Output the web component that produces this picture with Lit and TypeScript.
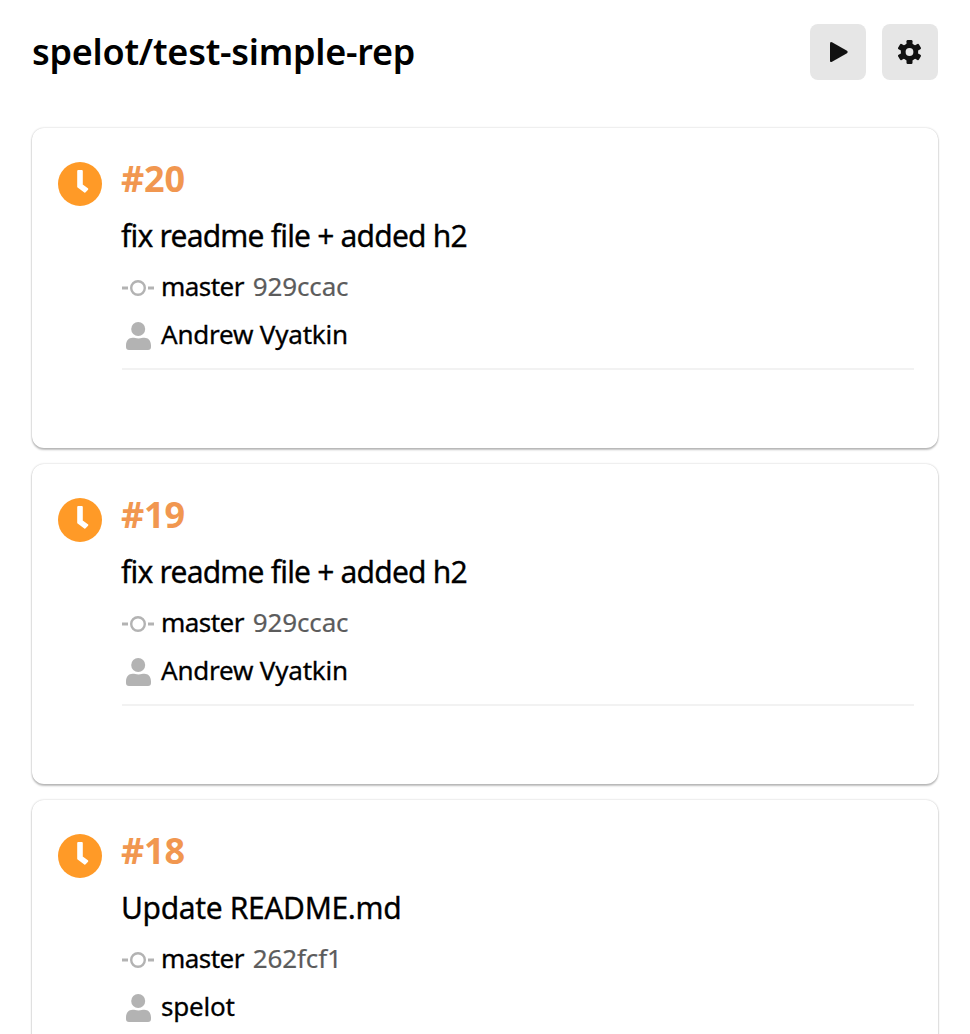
import { LitElement, html, css } from "lit";
import { customElement, property } from "lit/decorators.js";

interface Build {
  num: number;
  message: string;
  tracking: number;
  branch: string;
  hash: string;
  author: string;
}

const builds: Build[] = [
  { num: 20, message: "fix readme file + added h2", tracking: -0.8, branch: "master", hash: "929ccac", author: "Andrew Vyatkin" },
  { num: 19, message: "fix readme file + added h2", tracking: -0.8, branch: "master", hash: "929ccac", author: "Andrew Vyatkin" },
  { num: 18, message: "Update README.md", tracking: -0.36, branch: "master", hash: "262fcf1", author: "spelot" },
];

@customElement("build-card")
export class BuildCard extends LitElement {
  @property({ attribute: false }) build!: Build;

  static styles = css`
    :host {
      display: flex;
      box-sizing: border-box;
      height: 320px;
      padding: 24px 24px 0 24px;
      border-radius: 12px;
      background: #fff;
      box-shadow: 0 0 2px rgba(0, 0, 0, 0.24), 0 2px 2px rgba(0, 0, 0, 0.24);
    }
    svg { display: block; flex: none; }
    .status { margin: 10px 20px 0 2px; }
    .body { flex: 1; min-width: 0; }
    .num {
      box-sizing: border-box;
      padding-top: 3px;
      font-size: 36px;
      font-weight: 700;
      line-height: 48px;
      height: 56px;
      letter-spacing: -0.2px;
      margin-left: -1px;
      color: #f19750;
    }
    .message {
      box-sizing: border-box;
      padding-top: 8px;
      margin-left: -1px;
      font-size: 30px;
      line-height: 40px;
      height: 56px;
      -webkit-text-stroke: 0.3px currentColor;
    }
    .meta {
      display: flex;
      align-items: center;
      height: 48px;
      font-size: 26px;
      line-height: 32px;
      white-space: nowrap;
    }
    .meta svg { margin-right: 7px; }
    .meta span { margin-bottom: 4px; }
    .branch { letter-spacing: -0.55px; -webkit-text-stroke: 0.3px currentColor; }
    .author { letter-spacing: -0.2px; -webkit-text-stroke: 0.3px currentColor; }
    .hash { margin-left: 9px; letter-spacing: -0.15px; color: #5c5c5c; -webkit-text-stroke: 0.2px currentColor; }
    .rule { border-top: 2px solid #f2f2f2; margin-top: 8px; }
  `;

  render() {
    const b = this.build;
    return html`
      <svg class="status" width="44" height="44" viewBox="0 0 44 44">
        <circle cx="22" cy="22" r="22" fill="#ff9a27" />
        <path d="M20.2 9H23.800V23L29.300 27L26.900 29.600L20.2 24.800Z" fill="#fff" stroke="#fff" stroke-width="2" stroke-linejoin="round" />
      </svg>
      <div class="body">
        <div class="num">#${b.num}</div>
        <div class="message" style="letter-spacing:${b.tracking}px">${b.message}</div>
        <div class="meta">
          <svg width="32" height="32" viewBox="0 0 32 32" fill="none" stroke="#b3b3b3">
            <path d="M0 16H6M26 16H32" stroke-width="3" />
            <circle cx="16" cy="16" r="6.800" stroke-width="2.400" />
          </svg>
          <span class="branch">${b.branch}</span><span class="hash">${b.hash}</span>
        </div>
        <div class="meta">
          <svg width="32" height="32" viewBox="0 0 32 32" fill="#b3b3b3">
            <circle cx="16.200" cy="9" r="7" />
            <path d="M4 25.500C4 20.500 7 17.800 10.500 17.800C13 17.800 13.500 18.500 16.500 18.500S20 17.800 22.500 17.800C26 17.800 29 20.500 29 25.500V27Q29 30 26 30H7Q4 30 4 27Z" />
          </svg>
          <span class="author">${b.author}</span>
        </div>
        <div class="rule"></div>
      </div>
    `;
  }
}

@customElement("app-root")
export class AppRoot extends LitElement {
  static styles = css`
    :host {
      display: block;
      box-sizing: border-box;
      height: 1034px;
      overflow: hidden;
      padding: 24px 32px 0;
      background: #fff;
      color: #000;
      font-family: "Noto Sans", sans-serif;
    }
    header { display: flex; align-items: center; gap: 16px; margin-bottom: 48px; }
    h1 { flex: 1; margin: 0; font-size: 36px; font-weight: 600; line-height: 56px; letter-spacing: -0.25px; }
    button {
      display: flex;
      align-items: center;
      justify-content: center;
      width: 56px;
      height: 56px;
      padding: 0;
      border: 0;
      border-radius: 8px;
      background: #e6e6e6;
    }
    main { display: flex; flex-direction: column; gap: 16px; }
  `;

  render() {
    return html`
      <header>
        <h1>spelot/test-simple-rep</h1>
        <button aria-label="Run build">
          <svg width="24" height="24" viewBox="0 0 24 24" fill="#111">
            <path d="M4 3.500Q4 1.200 6 2.300L21 10.800Q22.600 12 21 13.200L6 21.700Q4 22.800 4 20.500Z" />
          </svg>
        </button>
        <button aria-label="Settings">
          <svg width="24" height="24" viewBox="0 0 24 24" fill="#111">
            <circle cx="11.500" cy="12" r="8.700" />
            <rect x="8.500" width="6" height="24" rx="1.200" />
            <rect x="8.500" width="6" height="24" rx="1.200" transform="rotate(60 11.500 12)" />
            <rect x="8.500" width="6" height="24" rx="1.200" transform="rotate(120 11.500 12)" />
            <circle cx="11.500" cy="12" r="3.900" fill="#e6e6e6" />
          </svg>
        </button>
      </header>
      <main>${builds.map((b) => html`<build-card .build=${b}></build-card>`)}</main>
    `;
  }
}
